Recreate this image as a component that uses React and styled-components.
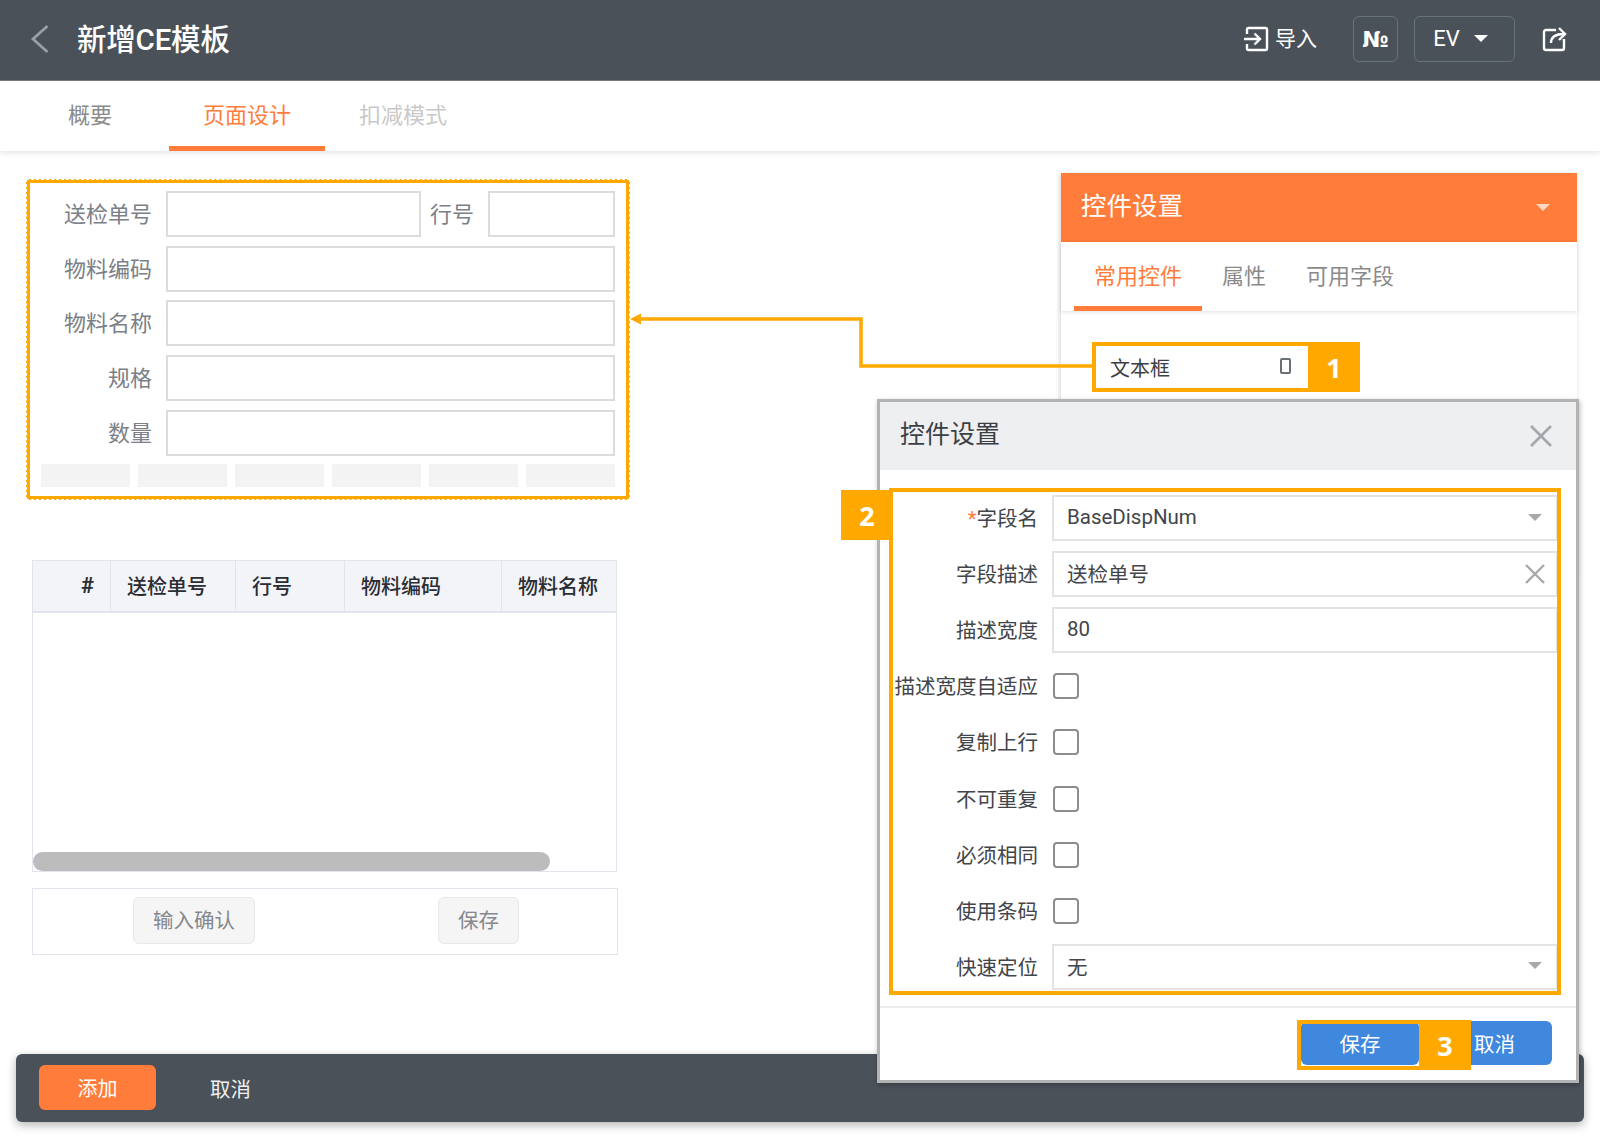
import styled, { createGlobalStyle } from "styled-components";

const ACCENT = "#ff7c3a";
const CALLOUT = "#ffa900";
const FONT = `Roboto, "Noto Sans CJK SC", sans-serif`;

const fields = ["物料编码", "物料名称", "规格", "数量"];
const columns = [
  { label: "#", width: 78, right: true },
  { label: "送检单号", width: 125 },
  { label: "行号", width: 109 },
  { label: "物料编码", width: 157 },
  { label: "物料名称", width: 114 },
];
const checks = ["描述宽度自适应", "复制上行", "不可重复", "必须相同", "使用条码"];

const App = () => {
  return (
    <Page>
      <GlobalStyle />
      <TopBar>
        <TitleWrap>
          <svg width="20" height="30" viewBox="0 0 20 30" fill="none">
            <path d="M17.500 2 3 15l14.500 13" stroke="#9a9fa5" strokeWidth="2.8" />
          </svg>
          <Title>新增CE模板</Title>
        </TitleWrap>
        <TopActions>
          <ImportAction>
            <svg width="26" height="26" viewBox="0 0 26 26" fill="none" stroke="#fff" strokeWidth="2.4">
              <path d="M4 8V3.500A1.500 1.500 0 0 1 5.500 2h17A1.500 1.500 0 0 1 24 3.500v19a1.500 1.500 0 0 1-1.500 1.500h-17A1.500 1.500 0 0 1 4 22.500V18" />
              <path d="M1 13h15M11.500 7.500 17 13l-5.500 5.500" />
            </svg>
            <ImportText>导入</ImportText>
          </ImportAction>
          <NumberButton>№</NumberButton>
          <LangButton>
            EV
            <Caret $color="#fff" />
          </LangButton>
          <svg width="26" height="26" viewBox="0 0 26 26" fill="none" stroke="#fff" strokeWidth="2.4">
            <path d="M14 4H4a2 2 0 0 0-2 2v16a2 2 0 0 0 2 2h16a2 2 0 0 0 2-2v-9" />
            <path d="M9 17c0-6 4-9 13-9M17 2l6 6-6 6" />
          </svg>
        </TopActions>
      </TopBar>

      <TabBar>
        <Tab $state="idle">概要</Tab>
        <Tab $state="active">页面设计</Tab>
        <Tab $state="disabled">扣减模式</Tab>
      </TabBar>

      <Content>
        <LeftColumn>
          <FormFrame>
            <FormRow>
              <FieldLabel>送检单号</FieldLabel>
              <InputsSplit>
                <FieldBox />
                <SideLabel>行号</SideLabel>
                <FieldBox />
              </InputsSplit>
            </FormRow>
            {fields.map((name) => (
              <FormRow key={name}>
                <FieldLabel>{name}</FieldLabel>
                <FieldBox />
              </FormRow>
            ))}
            <SkeletonRow>
              {[0, 1, 2, 3, 4, 5].map((i) => (
                <Skeleton key={i} />
              ))}
            </SkeletonRow>
          </FormFrame>

          <TableWrap>
            <TableHead>
              {columns.map((col) => (
                <HeadCell key={col.label} $width={col.width} $right={col.right}>
                  {col.label}
                </HeadCell>
              ))}
            </TableHead>
            <TableBody>
              <ScrollThumb />
            </TableBody>
          </TableWrap>

          <ActionBox>
            <GhostButton>输入确认</GhostButton>
            <GhostButton>保存</GhostButton>
          </ActionBox>
        </LeftColumn>

        <SidePanel>
          <PanelHead>
            <PanelTitle>控件设置</PanelTitle>
            <Caret $color="#ffd9c4" />
          </PanelHead>
          <PanelTabs>
            <PanelTab $active>常用控件</PanelTab>
            <PanelTab>属性</PanelTab>
            <PanelTab>可用字段</PanelTab>
          </PanelTabs>
          <WidgetItem>
            文本框
            <Tofu />
          </WidgetItem>
        </SidePanel>
      </Content>

      <BottomBar>
        <AddButton>添加</AddButton>
        <CancelText>取消</CancelText>
      </BottomBar>

      <Dialog>
        <DialogHead>
          <DialogTitle>控件设置</DialogTitle>
          <svg width="22" height="22" viewBox="0 0 22 22" fill="none" stroke="#a3a6aa" strokeWidth="2.6">
            <path d="M1 1l20 20M21 1 1 21" />
          </svg>
        </DialogHead>
        <DialogBody>
          <DialogRow>
            <DialogLabel>
              <Required>*</Required>字段名
            </DialogLabel>
            <DialogInput>
              BaseDispNum
              <Caret $color="#a8a8a8" />
            </DialogInput>
          </DialogRow>
          <DialogRow>
            <DialogLabel>字段描述</DialogLabel>
            <DialogInput>
              送检单号
              <ClearIcon width="20" height="20" viewBox="0 0 20 20" fill="none" stroke="#a8a8a8" strokeWidth="2.4">
                <path d="M1 1l18 18M19 1 1 19" />
              </ClearIcon>
            </DialogInput>
          </DialogRow>
          <DialogRow>
            <DialogLabel>描述宽度</DialogLabel>
            <DialogInput>80</DialogInput>
          </DialogRow>
          {checks.map((name) => (
            <DialogRow key={name}>
              <DialogLabel>{name}</DialogLabel>
              <CheckBox />
            </DialogRow>
          ))}
          <DialogRow>
            <DialogLabel>快速定位</DialogLabel>
            <DialogInput>
              无
              <Caret $color="#a8a8a8" />
            </DialogInput>
          </DialogRow>
        </DialogBody>
        <DialogFoot>
          <BlueButton $width={118}>保存</BlueButton>
          <BlueButton $width={107}>
            <CancelLabel>取消</CancelLabel>
          </BlueButton>
        </DialogFoot>
      </Dialog>

      {/* annotations drawn over the screenshot */}
      <ConnectorArrow width="470" height="60" viewBox="0 0 470 60" fill="none">
        <path d="M462 50H231V3H10" stroke={CALLOUT} strokeWidth="3.500" />
        <path d="M0 3l11-5.500v11z" fill={CALLOUT} />
      </ConnectorArrow>
      <Callout $x={1092} $y={342} $w={216} $h={50} $open />
      <Badge $x={1308} $y={342} $h={50}>1</Badge>
      <Callout $x={889} $y={488} $w={672} $h={507} />
      <Badge $x={841} $y={490} $h={50}>2</Badge>
      <Callout $x={1297} $y={1020} $w={122} $h={50} $open />
      <Badge $x={1419} $y={1020} $h={50}>3</Badge>
    </Page>
  );
};

export default App;

const GlobalStyle = createGlobalStyle`
  body {
    margin: 0;
    background: #fff;
    font-family: ${FONT};
  }
`;
const Page = styled.div`
  position: relative;
  width: 1600px;
  height: 1138px;
  overflow: hidden;
  background: #fff;
`;
const TopBar = styled.div`
  height: 81px;
  background: #4a5159;
  border-bottom: 1px solid #777c82;
  box-sizing: border-box;
  display: flex;
  align-items: center;
  justify-content: space-between;
  padding: 0 32px 2px 30px;
`;
const TitleWrap = styled.div`
  display: flex;
  align-items: center;
  gap: 27px;
`;
const Title = styled.div`
  color: #fff;
  font-size: 29.500px;
  font-weight: 500;
  letter-spacing: -0.2px;
  margin-top: -4px;
`;
const TopActions = styled.div`
  display: flex;
  align-items: center;
`;
const ImportAction = styled.div`
  display: flex;
  align-items: center;
  gap: 6px;
  color: #fff;
  font-size: 21px;
  margin-right: 36px;
`;
const ImportText = styled.span`
  margin-top: -4px;
`;
const OutlineButton = styled.div`
  height: 46px;
  box-sizing: border-box;
  border: 1px solid #66737f;
  border-radius: 6px;
  display: flex;
  align-items: center;
  justify-content: center;
  color: #fff;
`;
const NumberButton = styled(OutlineButton)`
  width: 45px;
  font-size: 22px;
  font-weight: 700;
  font-family: "DejaVu Sans", sans-serif;
  margin-right: 16px;
`;
const LangButton = styled(OutlineButton)`
  width: 101px;
  gap: 14px;
  font-size: 22px;
  padding: 0 8px 2px 0;
  margin-right: 27px;
`;
const Caret = styled.i`
  display: block;
  width: 0;
  height: 0;
  border-left: 7px solid transparent;
  border-right: 7px solid transparent;
  border-top: 7px solid ${(props) => props.$color};
`;
const TabBar = styled.div`
  height: 70px;
  display: flex;
  padding-left: 68px;
  box-shadow: 0 2px 5px rgba(0, 0, 0, 0.1);
  box-sizing: border-box;
`;
const Tab = styled.div`
  padding: 0 34px 2px;
  font-size: 22px;
  display: flex;
  align-items: center;
  box-sizing: border-box;
  color: ${(props) =>
    props.$state === "active" ? ACCENT : props.$state === "disabled" ? "#c9c9c9" : "#8a8a8a"};
  border-bottom: 5px solid ${(props) => (props.$state === "active" ? ACCENT : "transparent")};

  &:first-child {
    padding: 0 0 2px;
    margin-right: 57px;
  }
`;
const Content = styled.div`
  display: flex;
  justify-content: space-between;
  padding: 0 23px 0 26px;
`;
const LeftColumn = styled.div`
  display: flex;
  flex-direction: column;
  padding-top: 28px;
`;
const FormFrame = styled.div`
  width: 604px;
  height: 321px;
  box-sizing: border-box;
  border: 4px solid ${CALLOUT};
  outline: 1px dashed #fff;
  outline-offset: -1px;
  padding: 8px 11px 0 11px;
  display: flex;
  flex-direction: column;
  gap: 8.700px;
`;
const FormRow = styled.div`
  display: grid;
  grid-template-columns: 111px 1fr;
  grid-template-rows: 46px;
  column-gap: 14px;
  height: 46px;
`;
const FieldLabel = styled.div`
  text-align: right;
  font-size: 22px;
  line-height: 48px;
  color: #7b8087;
  white-space: nowrap;
`;
const InputsSplit = styled.div`
  display: grid;
  grid-template-columns: 255px 43px 1fr;
  grid-template-rows: 46px;
  column-gap: 9px;
`;
const SideLabel = styled(FieldLabel)`
  margin-right: -6px;
  text-align: left;
`;
const FieldBox = styled.div`
  border: 2px solid #dcdcdc;
  box-sizing: border-box;
  background: #fff;
  ${InputsSplit} &:last-child {
    margin-left: 6px;
  }
`;
const SkeletonRow = styled.div`
  display: grid;
  grid-template-columns: repeat(6, 1fr);
  column-gap: 8px;
  height: 23px;
`;
const Skeleton = styled.div`
  background: #f3f3f3;
`;
const TableWrap = styled.div`
  width: 585px;
  margin: 60px 0 0 6px;
  border: 1px solid #e1e4ed;
  box-sizing: border-box;
`;
const TableHead = styled.div`
  height: 52px;
  display: flex;
  background: #f3f4f8;
  border-bottom: 2px solid #e1e4ed;
  box-sizing: border-box;
`;
const HeadCell = styled.div`
  width: ${(props) => props.$width}px;
  box-sizing: border-box;
  padding: 0 16px 2px;
  display: flex;
  align-items: center;
  justify-content: ${(props) => (props.$right ? "flex-end" : "flex-start")};
  font-size: ${(props) => (props.$right ? 22 : 20)}px;
  font-weight: ${(props) => (props.$right ? 700 : 500)};
  color: #2a2d33;
  border-right: 1px solid #e1e4ed;

  &:last-child {
    border-right: 0;
  }
`;
const TableBody = styled.div`
  height: 258px;
  display: flex;
  flex-direction: column;
  justify-content: flex-end;
`;
const ScrollThumb = styled.div`
  width: 517px;
  height: 19px;
  border-radius: 10px;
  background: #bcbcbc;
`;
const ActionBox = styled.div`
  width: 586px;
  height: 67px;
  margin: 16px 0 0 6px;
  box-sizing: border-box;
  border: 1px solid #e1e4ed;
  display: flex;
  align-items: center;
  gap: 183px;
  padding-left: 100px;
`;
const GhostButton = styled.div`
  padding: 0 19px 3px;
  height: 47px;
  margin-top: -2px;
  box-sizing: border-box;
  display: flex;
  align-items: center;
  background: #f5f5f5;
  border: 1px solid #e8e8e8;
  border-radius: 6px;
  color: #85888c;
  font-size: 20.500px;
`;
const SidePanel = styled.div`
  width: 516px;
  height: 400px;
  margin-top: 22px;
  box-shadow: -1px 1px 5px rgba(0, 0, 0, 0.18);
`;
const PanelHead = styled.div`
  height: 69px;
  background: ${ACCENT};
  color: #fff;
  font-size: 25.500px;
  display: flex;
  align-items: center;
  justify-content: space-between;
  padding: 0 27px 0 20px;
`;
const PanelTitle = styled.span`
  margin-top: -9px;
`;
const PanelTabs = styled.div`
  height: 69px;
  display: flex;
  padding-left: 13px;
  box-shadow: 0 1px 4px rgba(0, 0, 0, 0.12);
`;
const PanelTab = styled.div`
  padding: 0 20px;
  display: flex;
  align-items: center;
  box-sizing: border-box;
  font-size: 22px;
  color: ${(props) => (props.$active ? ACCENT : "#8a8a8a")};
  border-bottom: 5px solid ${(props) => (props.$active ? ACCENT : "transparent")};
`;
const WidgetItem = styled.div`
  width: 212px;
  height: 42px;
  margin: 35px 0 0 35px;
  padding: 0 17px 0 14px;
  box-sizing: border-box;
  display: flex;
  align-items: center;
  justify-content: space-between;
  font-size: 20px;
  color: #3c3f44;
`;
const Tofu = styled.span`
  width: 11px;
  height: 16px;
  margin-top: -3px;
  border: 2px solid #6a7077;
  border-radius: 2px;
  box-sizing: border-box;
`;
const BottomBar = styled.div`
  position: absolute;
  left: 16px;
  top: 1054px;
  width: 1568px;
  height: 68px;
  box-sizing: border-box;
  padding: 0 0 1px 23px;
  background: #4a5159;
  border-radius: 6px;
  box-shadow: 0 3px 10px rgba(0, 0, 0, 0.3);
  display: flex;
  align-items: center;
  gap: 54px;
`;
const AddButton = styled.div`
  width: 117px;
  height: 45px;
  background: ${ACCENT};
  border-radius: 6px;
  color: #fff;
  font-size: 20px;
  display: flex;
  align-items: center;
  justify-content: center;
`;
const CancelText = styled.div`
  color: #f0f0f0;
  font-size: 20.500px;
`;
const Dialog = styled.div`
  position: absolute;
  left: 877px;
  top: 399px;
  width: 702px;
  height: 684px;
  box-sizing: border-box;
  background: #fff;
  border: 3px solid #b3b3b3;
  box-shadow: 1px 2px 5px rgba(0, 0, 0, 0.25);
  display: flex;
  flex-direction: column;
`;
const DialogHead = styled.div`
  height: 68px;
  flex: none;
  background: #eeeff1;
  font-size: 25px;
  color: #3c3f44;
  display: flex;
  align-items: center;
  justify-content: space-between;
  padding: 0 24px 0 20px;
`;
const DialogTitle = styled.span`
  margin-top: -8px;
`;
const DialogBody = styled.div`
  padding: 20px 18px 0 0;
  display: flex;
  flex-direction: column;
`;
const DialogRow = styled.div`
  display: grid;
  grid-template-columns: 158px 1fr;
  column-gap: 14px;
  align-items: center;
  height: 56.100px;
`;
const DialogLabel = styled.div`
  text-align: right;
  font-size: 20.500px;
  color: #42454a;
  white-space: nowrap;
  margin-top: -2px;
`;
const Required = styled.span`
  color: ${ACCENT};
`;
const DialogInput = styled.div`
  height: 46px;
  box-sizing: border-box;
  border: 2px solid #e3e3e3;
  padding: 0 14px 2px 13px;
  display: flex;
  align-items: center;
  justify-content: space-between;
  font-size: 20.500px;
  color: #42454a;
`;
const ClearIcon = styled.svg`
  margin: 2px -3px 0 0;
`;
const CheckBox = styled.div`
  width: 26px;
  height: 26px;
  margin-left: 1px;
  box-sizing: border-box;
  border: 2px solid #8d8d8d;
  border-radius: 4px;
`;
const DialogFoot = styled.div`
  margin-top: 11px;
  flex: 1;
  border-top: 2px solid #ececec;
  display: flex;
  align-items: center;
  justify-content: flex-end;
  gap: 26px;
  padding: 0 24px 1px 0;
`;
const BlueButton = styled.div`
  width: ${(props) => props.$width}px;
  height: 44px;
  background: #3f88dd;
  border-radius: 6px;
  color: #fff;
  font-size: 20.500px;
  display: flex;
  align-items: center;
  justify-content: center;
`;
const CancelLabel = styled.span`
  margin-right: 8px;
`;
const ConnectorArrow = styled.svg`
  position: absolute;
  left: 630px;
  top: 316px;
  overflow: visible;
`;
const Callout = styled.div`
  position: absolute;
  left: ${(props) => props.$x}px;
  top: ${(props) => props.$y}px;
  width: ${(props) => props.$w}px;
  height: ${(props) => props.$h}px;
  box-sizing: border-box;
  border: 4px solid ${CALLOUT};
  border-right-width: ${(props) => (props.$open ? 0 : 4)}px;
`;
const Badge = styled.div`
  position: absolute;
  left: ${(props) => props.$x}px;
  top: ${(props) => props.$y}px;
  width: 52px;
  height: ${(props) => props.$h}px;
  background: ${CALLOUT};
  color: #fff;
  font-family: "Open Sans", sans-serif;
  font-weight: 700;
  font-size: 27px;
  display: flex;
  align-items: center;
  justify-content: center;
`;
